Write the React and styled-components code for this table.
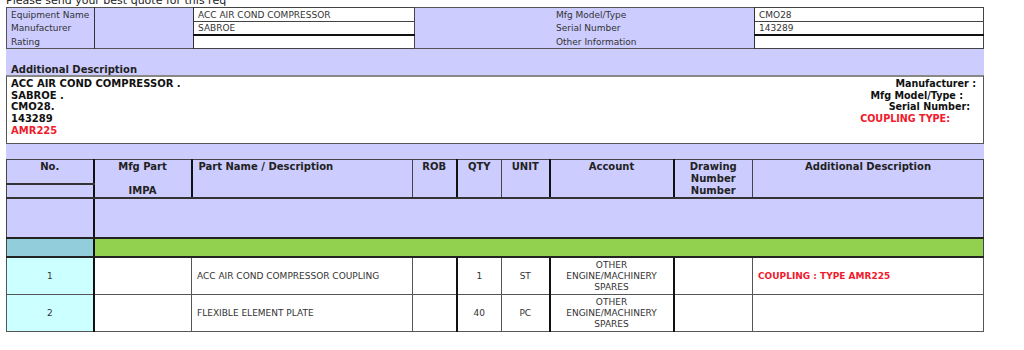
import styled, { createGlobalStyle } from "styled-components";

const GlobalStyle = createGlobalStyle`
  body {
    margin: 0;
    background: #fff;
    font-family: "DejaVu Sans", Verdana, sans-serif;
    color: #333;
    overflow: hidden;
  }
`;

const LAV = "#ccccff";

const Page = styled.div`
  padding-left: 6px;
  width: 978px;
`;

const Intro = styled.div`
  font-size: 11px;
  line-height: 10px;
  margin-top: -4px;
  margin-bottom: 1px;
  color: #222;
`;

const InfoTable = styled.table`
  width: 100%;
  border-collapse: collapse;
  border: 1px solid #555;
  font-size: 9px;
  td {
    padding: 0 4px;
    line-height: 12px;
    white-space: nowrap;
  }
`;

const InfoRow = styled.tr`
  td {
    height: ${(p) => p.h}px;
  }
`;

const Label = styled.td`
  background: ${LAV};
  width: ${(p) => p.w || "auto"};
  border-right: ${(p) => (p.edge ? "1px solid #333" : "none")};
  padding-left: ${(p) => p.pl || "4px"} !important;
`;

const Blank = styled.td`
  background: ${LAV};
  width: ${(p) => p.w};
  border-right: ${(p) => (p.edge ? "1px solid #333" : "none")};
`;

const Value = styled.td`
  background: #fff;
  width: ${(p) => p.w};
  border: 1px solid #444;
  border-bottom: ${(p) => (p.heavy ? "2px solid #111" : "1px solid #444")};
`;

const Band = styled.div`
  background: ${LAV};
  height: ${(p) => p.h}px;
  display: flex;
  align-items: flex-end;
  padding-left: 5px;
  font-size: 10px;
  font-weight: bold;
  color: #222;
`;

const DescBox = styled.div`
  display: flex;
  justify-content: space-between;
  height: 65px;
  border: 1px solid #555;
  border-top: 2px solid #888;
  padding: 1px 7px 0 4px;
  font-size: 10px;
  font-weight: bold;
  line-height: 11.7px;
  color: #111;
`;

const DescCol = styled.div`
  display: flex;
  flex-direction: column;
  align-items: ${(p) => (p.right ? "flex-end" : "flex-start")};
  font-size: ${(p) => (p.right ? "9.6px" : "10px")};
`;

const DescLine = styled.div`
  color: ${(p) => (p.red ? "#f01b2c" : "#111")};
  margin-right: ${(p) => p.inset || 0}px;
  white-space: nowrap;
`;

const ItemTable = styled.table`
  width: 100%;
  border-collapse: collapse;
  font-size: 9px;
  border: 1px solid #555;
`;

const Head = styled.th`
  background: ${LAV};
  color: #222;
  font-size: 10px;
  font-weight: bold;
  vertical-align: top;
  text-align: ${(p) => p.align || "center"};
  padding: 1px ${(p) => (p.align === "left" ? "6px" : "2px")} 0;
  line-height: 12px;
  border: 1px solid #444;
  border-right: ${(p) => (p.heavy ? "2px solid #111" : "1px solid #444")};
  border-bottom: 2px solid #333;
  width: ${(p) => p.w};
  height: ${(p) => p.h || "auto"};
  box-sizing: border-box;
`;

const SubHead = styled.td`
  background: ${LAV};
  border: 1px solid #444;
  border-right: 2px solid #111;
  border-bottom: 2px solid #333;
  height: 11px;
  padding: 0;
`;

const Fill = styled.td`
  background: ${(p) => p.bg};
  height: ${(p) => p.h}px;
  padding: 0;
  border: 1px solid #444;
  border-right: ${(p) => (p.heavy ? "2px solid #111" : "1px solid #444")};
  border-bottom: 2px solid #222;
`;

const Cell = styled.td`
  background: ${(p) => p.bg || "#fff"};
  height: 36px;
  padding: 0 ${(p) => (p.align === "left" ? "5px" : "2px")};
  text-align: ${(p) => p.align || "center"};
  line-height: 11px;
  color: ${(p) => (p.red ? "#f01b2c" : "#333")};
  font-weight: ${(p) => (p.red ? "bold" : "normal")};
  border: 1px solid #555;
  border-right: ${(p) => (p.heavy ? "2px solid #111" : "1px solid #555")};
`;

const items = [
  { no: 1, name: "ACC AIR COND COMPRESSOR COUPLING", qty: 1, unit: "ST", note: "COUPLING : TYPE AMR225" },
  { no: 2, name: "FLEXIBLE ELEMENT PLATE", qty: 40, unit: "PC", note: "" },
];

export default function App() {
  return (
    <Page>
      <GlobalStyle />
      <Intro>Please send your best quote for this req</Intro>

      <InfoTable>
        <tbody>
          <InfoRow h={13}>
            <Label w="79px" edge>Equipment Name</Label>
            <Blank w="90px" edge rowSpan={3} />
            <Value w="212px">ACC AIR COND COMPRESSOR</Value>
            <Blank w="131px" rowSpan={3} />
            <Label w="194px" pl="2px" edge>Mfg Model/Type</Label>
            <Value>CMO28</Value>
          </InfoRow>
          <InfoRow h={12}>
            <Label edge>Manufacturer</Label>
            <Value heavy>SABROE</Value>
            <Label pl="2px" edge>Serial Number</Label>
            <Value heavy>143289</Value>
          </InfoRow>
          <InfoRow h={12}>
            <Label edge>Rating</Label>
            <Value />
            <Label pl="2px" edge>Other Information</Label>
            <Value />
          </InfoRow>
        </tbody>
      </InfoTable>

      <Band h={26}>Additional Description</Band>
      <DescBox>
        <DescCol>
          <DescLine>ACC AIR COND COMPRESSOR .</DescLine>
          <DescLine>SABROE .</DescLine>
          <DescLine>CMO28.</DescLine>
          <DescLine>143289</DescLine>
          <DescLine red>AMR225</DescLine>
        </DescCol>
        <DescCol right>
          <DescLine>Manufacturer :</DescLine>
          <DescLine inset={13}>Mfg Model/Type :</DescLine>
          <DescLine inset={6}>Serial Number:</DescLine>
          <DescLine red inset={26}>COUPLING TYPE:</DescLine>
        </DescCol>
      </DescBox>
      <Band h={15} />

      <ItemTable>
        <thead>
          <tr>
            <Head w="87px" h="24px" heavy>No.</Head>
            <Head w="98px" heavy rowSpan={2}>
              Mfg Part
              <br />
              <br />
              IMPA
            </Head>
            <Head w="221px" align="left" rowSpan={2}>Part Name / Description</Head>
            <Head w="44px" heavy rowSpan={2}>ROB</Head>
            <Head w="45px" rowSpan={2}>QTY</Head>
            <Head w="48px" heavy rowSpan={2}>UNIT</Head>
            <Head w="124px" heavy rowSpan={2}>Account</Head>
            <Head w="79px" rowSpan={2}>
              Drawing
              <br />
              Number
              <br />
              Number
            </Head>
            <Head rowSpan={2}>Additional Description</Head>
          </tr>
          <tr>
            <SubHead />
          </tr>
        </thead>
        <tbody>
          <tr>
            <Fill bg={LAV} h={38} heavy />
            <Fill bg={LAV} h={38} colSpan={8} />
          </tr>
          <tr>
            <Fill bg="#92cddc" h={17} heavy />
            <Fill bg="#92d050" h={17} colSpan={8} />
          </tr>
          {items.map((it) => (
            <tr key={it.no}>
              <Cell bg="#ccffff" heavy>{it.no}</Cell>
              <Cell />
              <Cell align="left">{it.name}</Cell>
              <Cell heavy />
              <Cell>{it.qty}</Cell>
              <Cell heavy>{it.unit}</Cell>
              <Cell heavy>
                OTHER
                <br />
                ENGINE/MACHINERY
                <br />
                SPARES
              </Cell>
              <Cell />
              <Cell align="left" red>{it.note}</Cell>
            </tr>
          ))}
        </tbody>
      </ItemTable>
    </Page>
  );
}
